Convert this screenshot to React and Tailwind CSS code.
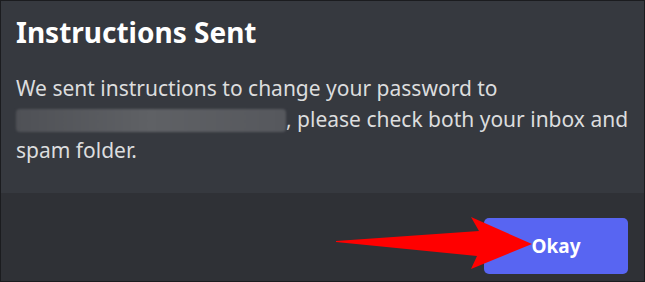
export default function App() {
  return (
    <div className="relative w-[645px] h-[282px] border border-[#1b1c1f] bg-[#36393f] flex flex-col overflow-hidden" style={{ fontFamily: '"Noto Sans", "Open Sans", sans-serif' }}>
      {/* Body */}
      <div className="h-[192px] px-[15px] pt-[12px]">
        <h1 className="text-[28px] leading-[38px] font-bold text-white">Instructions Sent</h1>
        <p className="mt-[22px] text-[21px] leading-[31px] text-[#dcddde] w-[620px]">
          We sent instructions to change your password to
          <br />
          <span className="inline-block align-middle -mt-[2px] w-[270px] h-[23px] bg-gradient-to-r from-[#4f5156] via-[#5f6165] to-[#56585d] blur-[1px] rounded-sm" />
          , please check both your inbox and spam folder.
        </p>
      </div>

      {/* Footer */}
      <div className="flex-1 bg-[#2f3136] flex justify-end items-start pt-[25px] pr-[16px]">
        <button className="w-[144px] h-[56px] rounded-[5px] bg-[#5865f2] text-white text-[19px] font-bold">Okay</button>
      </div>

      {/* Annotation arrow */}
      <svg className="absolute left-0 top-0 pointer-events-none" width="645" height="282" viewBox="0 0 645 282">
        <polygon fill="#ff0000" points="335,240 478,230 470,216 531,243 470,268 476,255 335,241" />
      </svg>
    </div>
  )
}
